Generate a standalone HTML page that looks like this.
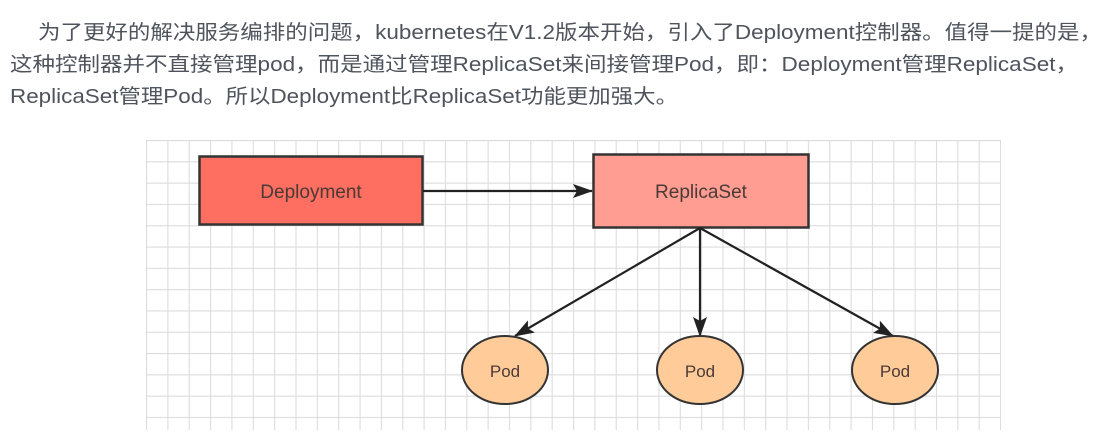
<!DOCTYPE html>
<html><head><meta charset="utf-8"><style>
html,body{margin:0;padding:0;background:#fff;width:1108px;height:442px;overflow:hidden}
svg{display:block}
</style></head><body>
<svg width="1108" height="442" viewBox="0 0 1108 442" xmlns="http://www.w3.org/2000/svg">
<defs>
<pattern id="g" x="146" y="140" width="21.35" height="21.3" patternUnits="userSpaceOnUse">
<path d="M0 0.5H21.35M0.5 0V21.3" stroke="#dcdcdc" stroke-width="1.2" fill="none"/>
</pattern>
<marker id="a" markerWidth="20" markerHeight="16" refX="19" refY="7" orient="auto" markerUnits="userSpaceOnUse" viewBox="0 0 20 14">
<path d="M0 0L20 7L0 14L4 7Z" fill="#222"/>
</marker>
</defs>
<g font-family="Liberation Sans, Noto Sans CJK SC, sans-serif" font-size="20" fill="#4e535c">
<text x="38" y="39" textLength="1064" lengthAdjust="spacingAndGlyphs">为了更好的解决服务编排的问题，kubernetes在V1.2版本开始，引入了Deployment控制器。值得一提的是，</text>
<text x="10" y="71" textLength="1068" lengthAdjust="spacingAndGlyphs">这种控制器并不直接管理pod，而是通过管理ReplicaSet来间接管理Pod，即：Deployment管理ReplicaSet，</text>
<text x="10" y="103" textLength="668" lengthAdjust="spacingAndGlyphs">ReplicaSet管理Pod。所以Deployment比ReplicaSet功能更加强大。</text>
</g>
<rect x="146" y="140" width="855" height="290" fill="url(#g)"/>
<g stroke="#333" stroke-width="2.5">
<rect x="199.5" y="156.5" width="223" height="68" fill="#ff6f61"/>
<rect x="593.5" y="154.5" width="215" height="73" fill="#ff9d93"/>
</g>
<g stroke="#222" stroke-width="2.2" fill="none" marker-end="url(#a)">
<line x1="423" y1="191" x2="592" y2="191"/>
<line x1="700" y1="228" x2="515" y2="336"/>
<line x1="700" y1="228" x2="700" y2="336"/>
<line x1="700" y1="228" x2="893" y2="336"/>
</g>
<g stroke="#333" stroke-width="2" fill="#ffcc99">
<ellipse cx="505" cy="370" rx="43" ry="34"/>
<ellipse cx="700" cy="370" rx="43" ry="34"/>
<ellipse cx="895" cy="370" rx="43" ry="34"/>
</g>
<g font-family="Liberation Sans, sans-serif" fill="#4a3a36" text-anchor="middle">
<text x="311" y="198" font-size="19">Deployment</text>
<text x="701" y="198" font-size="19">ReplicaSet</text>
<text x="505" y="377" font-size="17">Pod</text>
<text x="700" y="377" font-size="17">Pod</text>
<text x="895" y="377" font-size="17">Pod</text>
</g>
</svg>
</body></html>
